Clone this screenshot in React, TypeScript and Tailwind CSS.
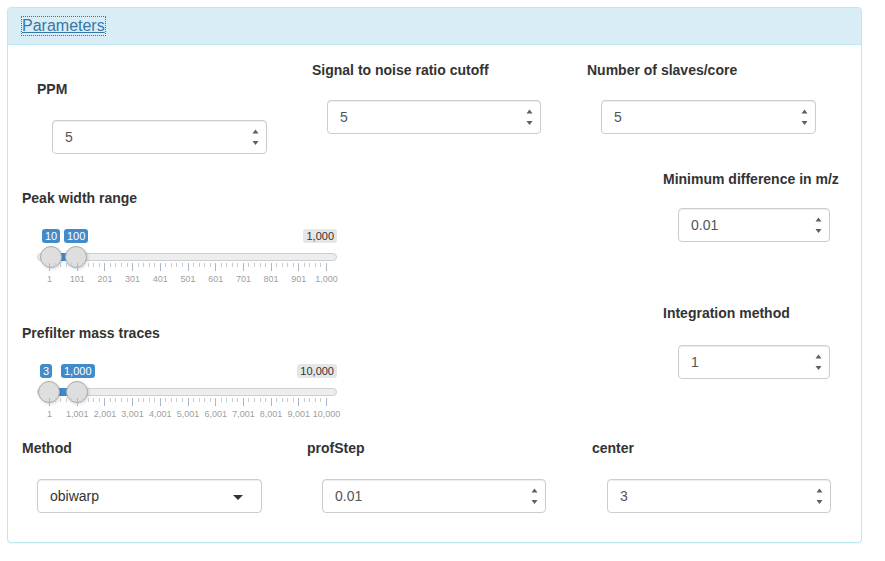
import React from "react";

const font = "font-['Liberation_Sans',Arial,sans-serif]";

const NumInput = ({ value, className }: { value: string; className: string }) => {
  return (
    <div
      className={`relative h-[34px] rounded-[4px] border border-[#ccc] bg-white shadow-[inset_0_1px_1px_rgba(0,0,0,0.075)] pl-[12px] flex items-center text-[14px] text-[#555] ${className}`}
    >
      {value}
      <svg className="absolute right-[7px] top-[8px]" width="7" height="17" viewBox="0 0 7 17">
        <path d="M0.5 4.5 L3.5 0.5 L6.5 4.5 Z" fill="#5f5f5f" />
        <path d="M0.5 12 L3.5 16 L6.5 12 Z" fill="#5f5f5f" />
      </svg>
    </div>
  );
};

type SliderProps = {
  min: number;
  max: number;
  from: number;
  to: number;
  fromLabel: string;
  toLabel: string;
  fromLeft: number;
  toLeft: number;
  maxLabel: string;
  ticks: string[];
};

const RangeSlider = ({ min, max, from, to, fromLabel, toLabel, fromLeft, toLeft, maxLabel, ticks }: SliderProps) => {
  const pos = (v: number) => 12 + ((v - min) / (max - min)) * 277;
  const step = 277 / 10;
  const minors: number[] = [];
  for (let i = 0; i < 10; i++) {
    for (let j = 1; j < 5; j++) minors.push(12 + i * step + (j * step) / 5);
  }
  return (
    <div className="relative h-[60px] w-[300px]">
      <span
        className="absolute top-[3px] h-[14px] px-[3px] rounded-[3px] bg-[#428bca] text-white text-[11px] leading-[14px]"
        style={{ left: fromLeft }}
      >
        {fromLabel}
      </span>
      <span
        className="absolute top-[3px] h-[14px] px-[3px] rounded-[3px] bg-[#428bca] text-white text-[11px] leading-[14px]"
        style={{ left: toLeft }}
      >
        {toLabel}
      </span>
      <span className="absolute right-0 top-[3px] h-[14px] px-[3px] rounded-[3px] bg-[#e6e6e6] text-[#333] text-[11px] leading-[14px]">
        {maxLabel}
      </span>

      <div className="absolute left-0 right-0 top-[27px] h-[8px] rounded-full border border-[#cfcfcf] bg-[#ededed]" />
      <div
        className="absolute top-[27px] h-[8px] bg-[#428bca]"
        style={{ left: pos(from), width: pos(to) - pos(from) }}
      />
      <div
        className="absolute top-[20px] h-[22px] w-[22px] rounded-full border border-[#ababab] bg-[#dedede] shadow-[1px_1px_3px_rgba(0,0,0,0.15)]"
        style={{ left: pos(from) - 11 }}
      />
      <div
        className="absolute top-[20px] h-[22px] w-[22px] rounded-full border border-[#ababab] bg-[#dedede] shadow-[1px_1px_3px_rgba(0,0,0,0.15)]"
        style={{ left: pos(to) - 11 }}
      />

      {ticks.map((t, i) => (
        <React.Fragment key={t}>
          <div className="absolute top-[37px] h-[8px] w-px bg-[#a9b8c8]" style={{ left: 12 + i * step }} />
          <span
            className="absolute top-[48px] -translate-x-1/2 text-[9px] leading-[11px] text-[#a0a0a0] whitespace-nowrap"
            style={{ left: 12 + i * step + 0.5 }}
          >
            {t}
          </span>
        </React.Fragment>
      ))}
      {minors.map((x, i) => (
        <div key={i} className="absolute top-[37px] h-[4px] w-px bg-[#c3cdd7]" style={{ left: x }} />
      ))}
    </div>
  );
};

const Label = ({ children, className = "" }: { children: React.ReactNode; className?: string }) => (
  <div className={`h-[20px] leading-[20px] text-[14px] font-bold text-[#333] whitespace-nowrap ${className}`}>{children}</div>
);

const App = () => {
  return (
    <div className={`min-h-screen bg-white pt-[7px] pl-[7px] ${font}`}>
      <div className="w-[855px] rounded-[4px] border border-[#bce8f1] bg-white shadow-[0_1px_1px_rgba(0,0,0,0.05)]">
        <div className="h-[37px] flex items-center pl-[14px] bg-[#d9edf7] border-b border-[#bce8f1] rounded-t-[3px]">
          <span className="text-[16px] leading-[18px] text-[#3677a8] underline outline-1 outline-dotted outline-[#4a6f8f]">
            Parameters
          </span>
        </div>

        <div className="flex flex-col pl-[14px] pb-[29px]">
          <div className="flex items-start">
            <div className="w-[275px] shrink-0 pl-[15px] pt-[34px] flex flex-col gap-[21px]">
              <Label>PPM</Label>
              <NumInput value="5" className="ml-[15px] w-[215px]" />
            </div>
            <div className="w-[275px] shrink-0 pl-[15px] pt-[15px] flex flex-col gap-[20px]">
              <Label>Signal to noise ratio cutoff</Label>
              <NumInput value="5" className="ml-[15px] w-[214px]" />
            </div>
            <div className="w-[275px] shrink-0 pl-[15px] pt-[15px] flex flex-col gap-[20px]">
              <Label>Number of slaves/core</Label>
              <NumInput value="5" className="ml-[14px] w-[215px]" />
            </div>
          </div>

          <div className="flex items-start">
            <div className="w-[626px] shrink-0 flex flex-col">
              <Label className="mt-[34px]">Peak width range</Label>
              <div className="mt-[18px] ml-[15px]">
                <RangeSlider
                  min={1}
                  max={1000}
                  from={10}
                  to={100}
                  fromLabel="10"
                  toLabel="100"
                  fromLeft={5}
                  toLeft={27}
                  maxLabel="1,000"
                  ticks={["1", "101", "201", "301", "401", "501", "601", "701", "801", "901", "1,000"]}
                />
              </div>
              <Label className="mt-[37px]">Prefilter mass traces</Label>
              <div className="mt-[18px] ml-[15px]">
                <RangeSlider
                  min={1}
                  max={10000}
                  from={3}
                  to={1000}
                  fromLabel="3"
                  toLabel="1,000"
                  fromLeft={3}
                  toLeft={24}
                  maxLabel="10,000"
                  ticks={["1", "1,001", "2,001", "3,001", "4,001", "5,001", "6,001", "7,001", "8,001", "9,001", "10,000"]}
                />
              </div>
            </div>
            <div className="pl-[15px] flex flex-col">
              <Label className="mt-[15px]">Minimum difference in m/z</Label>
              <NumInput value="0.01" className="mt-[19px] ml-[15px] w-[152px]" />
              <Label className="mt-[61px]">Integration method</Label>
              <NumInput value="1" className="mt-[22px] ml-[15px] w-[152px]" />
            </div>
          </div>

          <div className="flex items-start pt-[17px]">
            <div className="w-[285px] shrink-0 flex flex-col gap-[21px]">
              <Label>Method</Label>
              <div className="relative ml-[15px] w-[225px] h-[34px] rounded-[4px] border border-[#ccc] bg-white shadow-[inset_0_1px_1px_rgba(0,0,0,0.075)] pl-[12px] flex items-center text-[14px] text-[#333]">
                obiwarp
                <span className="absolute right-[18px] top-[15px] h-0 w-0 border-x-[5px] border-t-[5px] border-x-transparent border-t-[#333]" />
              </div>
            </div>
            <div className="w-[285px] shrink-0 flex flex-col gap-[21px]">
              <Label>profStep</Label>
              <NumInput value="0.01" className="ml-[15px] w-[224px]" />
            </div>
            <div className="w-[254px] shrink-0 flex flex-col gap-[21px]">
              <Label>center</Label>
              <NumInput value="3" className="ml-[15px] w-[224px]" />
            </div>
          </div>
        </div>
      </div>
    </div>
  );
};

export default App;
